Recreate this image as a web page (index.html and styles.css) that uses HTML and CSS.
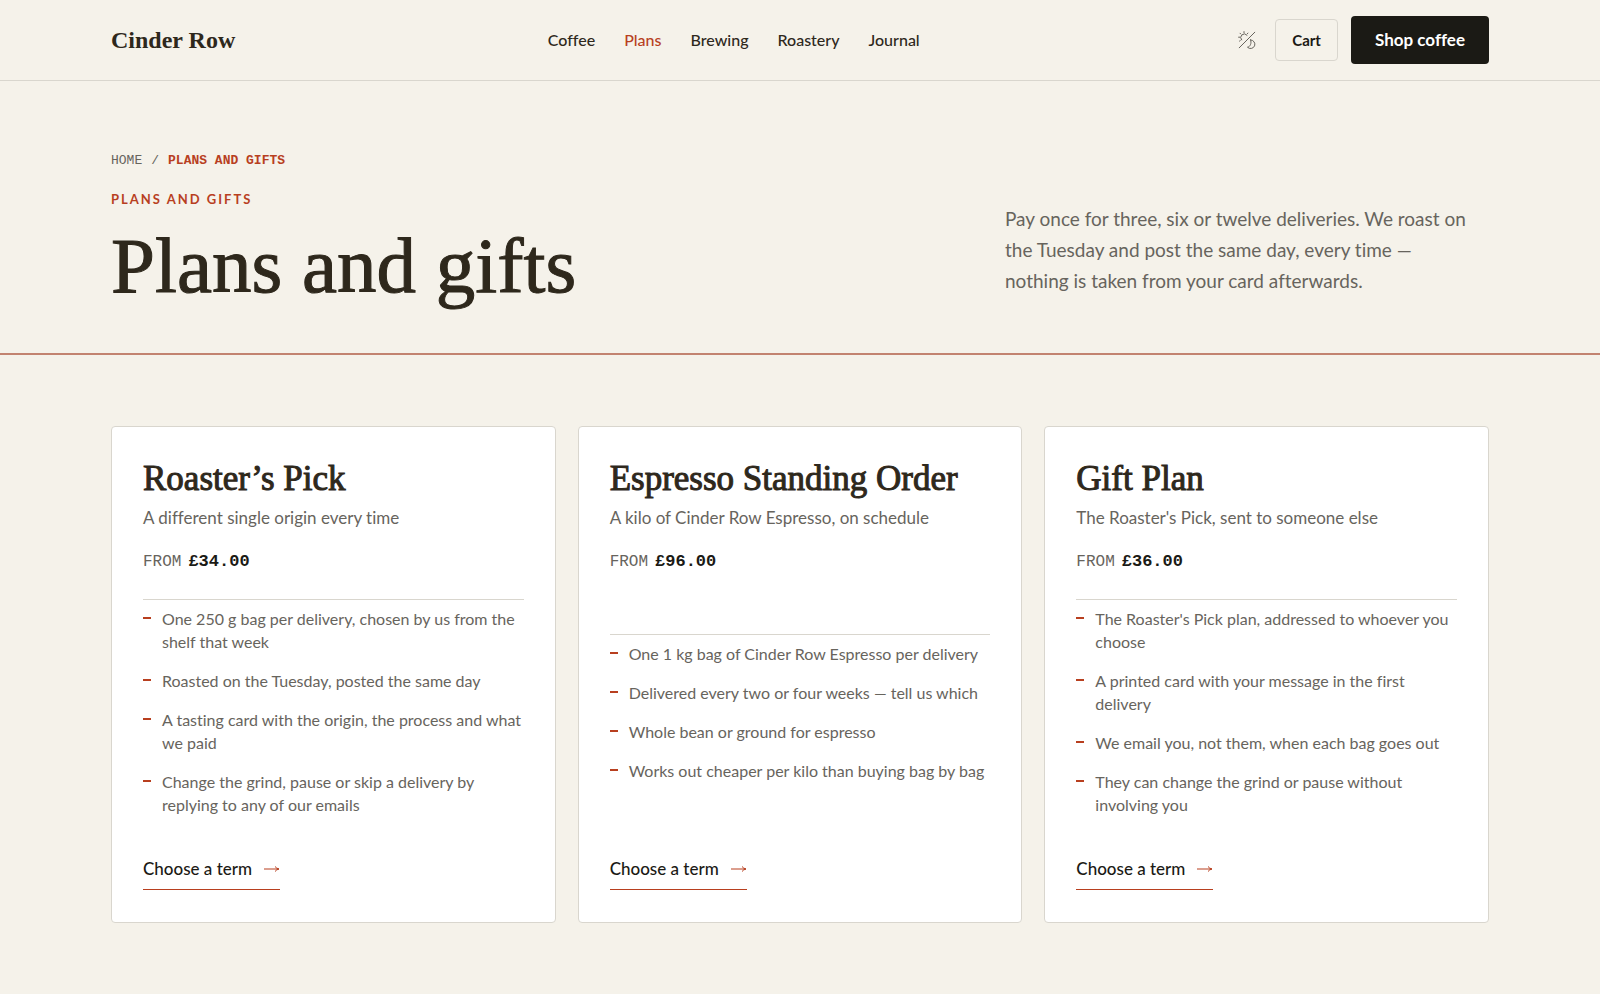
FILE: index.html
```html
<!DOCTYPE html>
<html lang="en">
<head>
<meta charset="utf-8">
<meta name="viewport" content="width=device-width, initial-scale=1">
<title>Plans and gifts — Cinder Row</title>
<link rel="stylesheet" href="styles.css">
</head>
<body>
<header class="site-header">
  <div class="container header-row">
    <a class="brand" href="#">Cinder Row</a>
    <nav class="main-nav" aria-label="Main">
      <a href="#">Coffee</a>
      <a href="#" class="is-current" aria-current="page">Plans</a>
      <a href="#">Brewing</a>
      <a href="#">Roastery</a>
      <a href="#">Journal</a>
    </nav>
    <div class="header-actions">
      <button class="theme-toggle" type="button" aria-label="Switch theme">
        <svg viewBox="0 0 18 18" width="18" height="18" fill="none" stroke="currentColor" stroke-linecap="round" stroke-linejoin="round" aria-hidden="true">
          <path d="M1.2 16.8 16.8 1.2"/>
          <path d="M3.6 8.900A3.500 3.500 0 1 1 9 4.200"/>
          <path d="M6 .6v1.200M2 2.200l.8.800M.6 6.200h1.200M1.500 10.100l.8-.6M9.900 2.100l-.7.800"/>
          <path d="M12.600 8.900a4.300 4.300 0 1 1-3.100 7.300c2.700-.4 4.300-3.900 3.100-7.300Z"/>
        </svg>
      </button>
      <button class="cart-button" type="button">Cart</button>
      <a class="shop-button" href="#">Shop coffee</a>
    </div>
  </div>
</header>

<main>
  <section class="hero">
    <div class="container">
      <nav class="breadcrumb" aria-label="Breadcrumb">
        <a href="#">Home</a>
        <span aria-hidden="true">/</span>
        <span class="crumb-current" aria-current="page">Plans and gifts</span>
      </nav>
      <div class="hero-row">
        <div>
          <p class="eyebrow">Plans and gifts</p>
          <h1 class="hero-title">Plans and gifts</h1>
        </div>
        <p class="hero-intro">Pay once for three, six or twelve deliveries. We roast on the Tuesday and post the same day, every time — nothing is taken from your card afterwards.</p>
      </div>
    </div>
  </section>

  <section class="plans">
    <div class="container plan-grid">
      <article class="plan-card">
        <h2 class="plan-title">Roaster’s Pick</h2>
        <p class="plan-summary">A different single origin every time</p>
        <p class="plan-price"><span>From</span> <strong>£34.00</strong></p>
        <ul class="plan-list">
          <li>One 250 g bag per delivery, chosen by us from the shelf that week</li>
          <li>Roasted on the Tuesday, posted the same day</li>
          <li>A tasting card with the origin, the process and what we paid</li>
          <li>Change the grind, pause or skip a delivery by replying to any of our emails</li>
        </ul>
        <a class="plan-link" href="#">Choose a term
          <svg viewBox="0 0 16 10" width="16" height="10" fill="none" stroke="currentColor" aria-hidden="true"><path d="M0 5H15M11 2.500Q12.500 4.500 15 5Q12.500 5.500 11 7.500"/></svg>
        </a>
      </article>
      <article class="plan-card">
        <h2 class="plan-title">Espresso Standing Order</h2>
        <p class="plan-summary">A kilo of Cinder Row Espresso, on schedule</p>
        <p class="plan-price"><span>From</span> <strong>£96.00</strong></p>
        <ul class="plan-list">
          <li>One 1 kg bag of Cinder Row Espresso per delivery</li>
          <li>Delivered every two or four weeks — tell us which</li>
          <li>Whole bean or ground for espresso</li>
          <li>Works out cheaper per kilo than buying bag by bag</li>
        </ul>
        <a class="plan-link" href="#">Choose a term
          <svg viewBox="0 0 16 10" width="16" height="10" fill="none" stroke="currentColor" aria-hidden="true"><path d="M0 5H15M11 2.500Q12.500 4.500 15 5Q12.500 5.500 11 7.500"/></svg>
        </a>
      </article>
      <article class="plan-card">
        <h2 class="plan-title">Gift Plan</h2>
        <p class="plan-summary">The Roaster's Pick, sent to someone else</p>
        <p class="plan-price"><span>From</span> <strong>£36.00</strong></p>
        <ul class="plan-list">
          <li>The Roaster's Pick plan, addressed to whoever you choose</li>
          <li>A printed card with your message in the first delivery</li>
          <li>We email you, not them, when each bag goes out</li>
          <li>They can change the grind or pause without involving you</li>
        </ul>
        <a class="plan-link" href="#">Choose a term
          <svg viewBox="0 0 16 10" width="16" height="10" fill="none" stroke="currentColor" aria-hidden="true"><path d="M0 5H15M11 2.500Q12.500 4.500 15 5Q12.500 5.500 11 7.500"/></svg>
        </a>
      </article>
    </div>
  </section>
</main>
</body>
</html>
```
FILE: styles.css
```css
:root {
  --paper: #f5f2ea;
  --surface: #ffffff;
  --ink: #1b1a15;
  --heading: #2e281c;
  --muted: #67645d;
  --accent: #b83f1f;
  --line: #d9d6ce;
  --sans: Lato, "Noto Sans", sans-serif;
  --serif: "Liberation Serif", serif;
  --mono: "Liberation Mono", monospace;
}

* { box-sizing: border-box; }

body {
  margin: 0;
  background: var(--surface);
  color: var(--ink);
  font-family: var(--sans);
  font-size: 17px;
  font-variant-ligatures: none;
  line-height: 24px;
}

h1, h2, p, ul { margin: 0; padding: 0; }
a { color: inherit; text-decoration: none; }
button { font: inherit; color: inherit; cursor: pointer; }

.container {
  max-width: 1426px;
  margin: 0 auto;
  padding: 0 24px;
}

.site-header {
  background: var(--paper);
  border-bottom: 1px solid var(--line);
}

.header-row {
  display: flex;
  align-items: center;
  justify-content: space-between;
  min-height: 80px;
}

.brand {
  color: var(--heading);
  font-family: var(--serif);
  font-size: 24px;
  font-weight: 700;
}

.main-nav {
  display: flex;
  gap: 29px;
  color: var(--heading);
  font-size: 16px;
  font-weight: 500;
}

.is-current { color: var(--accent); }

.header-actions {
  display: flex;
  align-items: center;
  gap: 13px;
}

.theme-toggle {
  display: flex;
  padding: 6px;
  border: 0;
  background: none;
  color: var(--muted);
}

.cart-button {
  height: 42px;
  padding: 0 16px;
  border: 1px solid var(--line);
  border-radius: 4px;
  background: none;
  font-size: 15px;
  font-weight: 700;
}

.shop-button {
  padding: 12px 24px;
  border-radius: 4px;
  background: var(--ink);
  color: #ffffff;
  font-size: 17px;
  font-weight: 700;
}

.hero {
  padding: 72px 0 39px;
  background: var(--paper);
  border-bottom: 2px solid #c28370;
}

.breadcrumb {
  display: flex;
  gap: 9px;
  color: var(--muted);
  font-family: var(--mono);
  font-size: 13px;
  line-height: 16px;
  text-transform: uppercase;
}

.crumb-current { color: var(--accent); font-weight: 700; }

.hero-row {
  display: grid;
  grid-template-columns: minmax(0, 1fr) 484px;
  gap: 40px;
  align-items: end;
  margin-top: 20px;
}

.eyebrow {
  color: var(--accent);
  font-size: 13px;
  font-weight: 700;
  letter-spacing: 2px;
  line-height: 20px;
  text-transform: uppercase;
}

.hero-title {
  margin-top: 13px;
  padding-bottom: 4px;
  color: var(--heading);
  font-family: var(--serif);
  font-size: 79px;
  font-weight: 400;
  line-height: 88px;
  -webkit-text-stroke: 1px currentColor;
}

.hero-intro {
  padding: 0 14px 18px 0;
  color: var(--muted);
  font-size: 19px;
  line-height: 31px;
}

.plans {
  padding: 71px 0;
  background: var(--paper);
}

.plan-grid {
  display: grid;
  grid-template-columns: repeat(3, minmax(0, 1fr));
  gap: 22px;
}

.plan-card {
  display: flex;
  flex-direction: column;
  align-items: flex-start;
  padding: 32px 31px;
  border: 1px solid var(--line);
  border-radius: 4px;
  background: var(--surface);
}

.plan-title {
  color: var(--heading);
  font-family: var(--serif);
  font-size: 35px;
  font-weight: 400;
  line-height: 40px;
  -webkit-text-stroke: 1px currentColor;
}

.plan-summary {
  margin-top: 7px;
  color: var(--muted);
  font-size: 17px;
  line-height: 24px;
}

.plan-price {
  display: flex;
  gap: 7px;
  margin: 20px 0 25px;
  color: var(--muted);
  font-family: var(--mono);
  font-size: 16px;
  line-height: 24px;
  text-transform: uppercase;
}

.plan-price strong { color: var(--ink); font-size: 17px; }

.plan-list {
  align-self: stretch;
  margin: auto 0;
  padding-top: 7px;
  border-top: 1px solid var(--line);
  color: var(--muted);
  font-size: 16px;
  line-height: 23px;
  list-style: none;
}

.plan-list li {
  display: flex;
  gap: 11px;
}

.plan-list li + li { margin-top: 16px; }

.plan-list li::before {
  content: "";
  flex: none;
  width: 8px;
  height: 2px;
  margin-top: 10px;
  background: var(--accent);
}

.plan-link {
  display: flex;
  align-items: center;
  gap: 12px;
  margin-top: 41px;
  padding-bottom: 8px;
  border-bottom: 1px solid var(--accent);
  font-size: 17px;
  font-weight: 500;
}

.plan-link svg { color: var(--accent); }

@media (max-width: 1000px) {
  .main-nav { display: none; }
  .hero-row, .plan-grid { grid-template-columns: minmax(0, 1fr); }
}
```
